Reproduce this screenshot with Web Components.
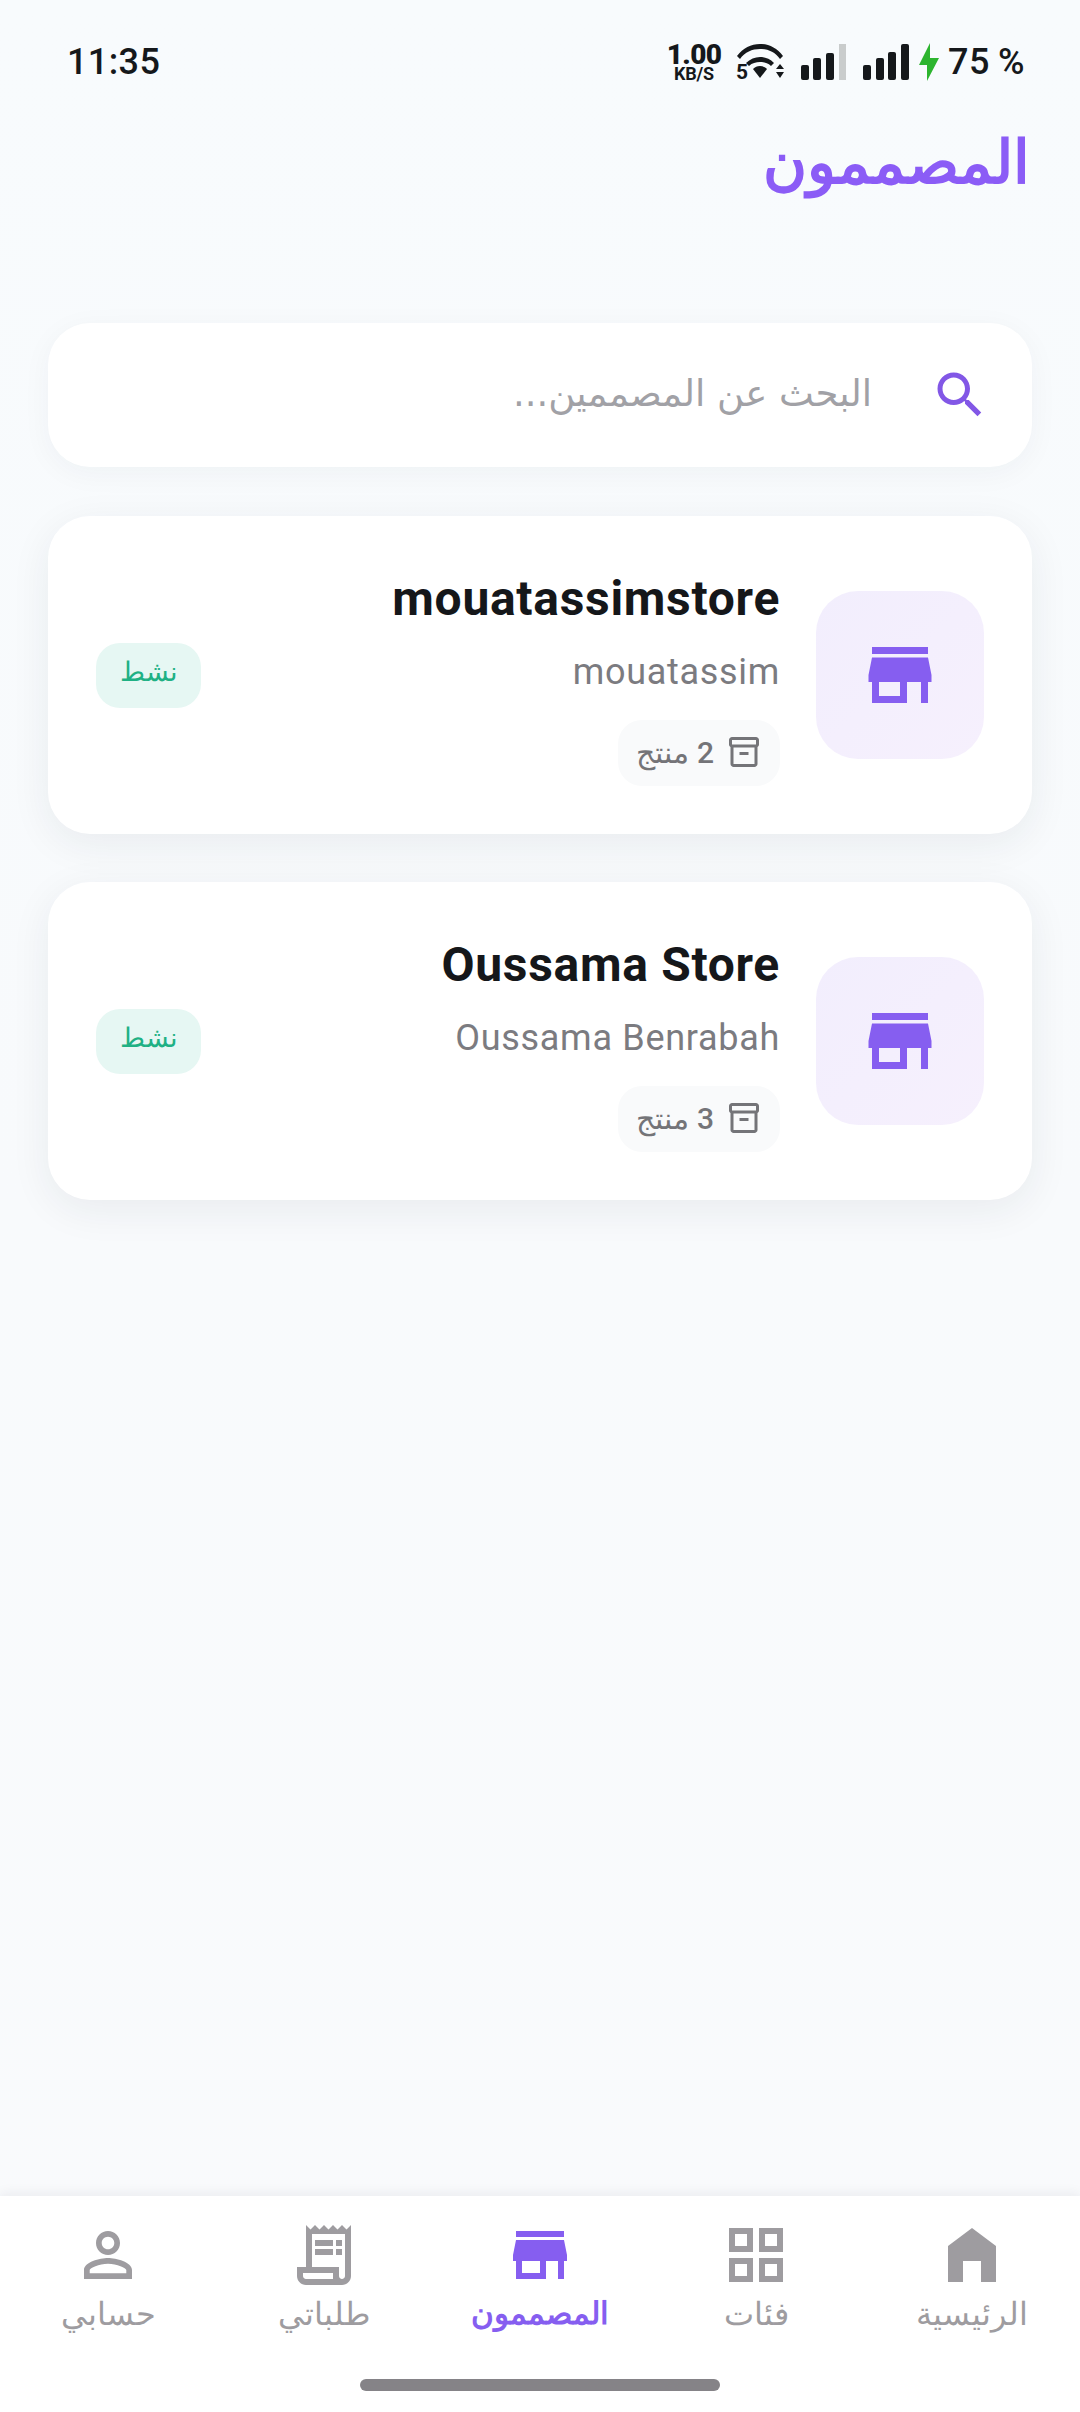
<!DOCTYPE html>
<html lang="ar">
<head>
<meta charset="utf-8">
<title>المصممون</title>
<style>
  html,body{margin:0;padding:0}
  body{width:1080px;height:2412px;overflow:hidden;display:flex;flex-direction:column;
    background:linear-gradient(180deg,#f8fbfd 0%,#f8fafc 50%,#f9fafc 100%);
    font-family:Roboto,"Noto Sans",sans-serif}
  main{flex:1;display:flex;flex-direction:column;min-height:0}
</style>
</head>
<body>
<status-bar></status-bar>
<main>
  <page-title>المصممون</page-title>
  <search-box placeholder="البحث عن المصممين..."></search-box>
  <designer-card name="mouatassimstore" owner="mouatassim" count="2"></designer-card>
  <designer-card name="Oussama Store" owner="Oussama Benrabah" count="3"></designer-card>
</main>
<bottom-nav>
  <nav-item icon="home" label="الرئيسية"></nav-item>
  <nav-item icon="grid" label="فئات"></nav-item>
  <nav-item icon="store" label="المصممون" active></nav-item>
  <nav-item icon="receipt" label="طلباتي"></nav-item>
  <nav-item icon="person" label="حسابي"></nav-item>
</bottom-nav>

<script>
const ICONS = {
  store: "M20 4H4v2h16V4zm1 10v-2l-1-5H4l-1 5v2h1v6h10v-6h4v6h2v-6h1zm-9 4H6v-4h6v4z",
  home: "M12 3 4 9v12h5v-7h6v7h5V9z",
  grid: "M3 3v8h8V3H3zm6 6H5V5h4v4zm-6 4v8h8v-8H3zm6 6H5v-4h4v4zm4-16v8h8V3h-8zm6 6h-4V5h4v4zm-6 4v8h8v-8h-8zm6 6h-4v-4h4v4z",
  receipt: "M19.5 3.5 18 2l-1.5 1.5L15 2l-1.5 1.5L12 2l-1.5 1.5L9 2 7.5 3.5 6 2v14H3v3c0 1.66 1.34 3 3 3h12c1.66 0 3-1.34 3-3V2l-1.5 1.5zM15 20H6c-.55 0-1-.45-1-1v-1h10v2zm4-1c0 .55-.45 1-1 1s-1-.45-1-1v-3H8V5h11v14zM15 7H9v2h6V7zm3 0h-2v2h2V7zm-3 3H9v2h6v-2zm3 0h-2v2h2v-2z",
  person: "M12 5.9c1.16 0 2.1.94 2.1 2.1s-.94 2.1-2.1 2.1S9.9 9.16 9.9 8s.94-2.1 2.1-2.1m0 9c2.97 0 6.1 1.46 6.1 2.1v1.1H5.9V17c0-.64 3.13-2.1 6.1-2.1M12 4C9.79 4 8 5.79 8 8s1.79 4 4 4 4-1.79 4-4-1.79-4-4-4zm0 9c-2.67 0-8 1.34-8 4v3h16v-3c0-2.66-5.33-4-8-4z",
  search: "M15.5 14h-.79l-.28-.27C15.41 12.59 16 11.11 16 9.5 16 5.91 13.09 3 9.5 3S3 5.91 3 9.5 5.91 16 9.5 16c1.61 0 3.09-.59 4.23-1.57l.27.28v.79l5 4.99L20.49 19l-4.99-5zm-6 0C7.01 14 5 11.99 5 9.5S7.01 5 9.5 5 14 7.01 14 9.5 11.99 14 9.5 14z",
  box: "M20 2H4c-1 0-2 .9-2 2v3.01c0 .72.43 1.34 1 1.69V20c0 1.1 1.1 2 2 2h14c.9 0 2-.9 2-2V8.7c.57-.35 1-.97 1-1.69V4c0-1.1-1-2-2-2zm-1 18H5V9h14v11zm1-13H4V4h16v3zM9 12h6v2H9z"
};
const icon = (name, size, color) =>
  `<svg width="${size}" height="${size}" viewBox="0 0 24 24" fill="${color}" style="display:block;flex:none"><path d="${ICONS[name]}"/></svg>`;

class StatusBar extends HTMLElement {
  constructor() {
    super();
    this.attachShadow({ mode: "open" }).innerHTML = `
      <style>
        :host{display:flex;flex:none;height:123px;box-sizing:border-box;padding:0 55px 0 67px;direction:ltr;
          justify-content:space-between;align-items:center;color:#15181b;font-family:Roboto,sans-serif}
        .time{font-size:36px;font-weight:500;letter-spacing:.4px}
        .right{display:flex;align-items:center}
        .speed{display:flex;flex-direction:column;align-items:center;font-weight:700;width:54px;margin-right:15px}
        .speed b{font-size:28px;line-height:23px;letter-spacing:-.7px}
        .speed span{font-size:18px;line-height:15px;letter-spacing:-.2px}
        svg{display:block;flex:none}
        .wifi{position:relative;width:50px;height:38px}
        .wifi span{position:absolute;left:0;bottom:-1px;font-size:21px;line-height:20px;font-weight:700}
        .batt{font-size:36px;font-weight:500;margin-left:9px;letter-spacing:.4px;word-spacing:-1px}
      </style>
      <span class="time">11:35</span>
      <div class="right">
        <div class="speed"><b>1.00</b><span>KB/S</span></div>
        <div class="wifi">
          <svg width="50" height="38" viewBox="0 0 50 38" fill="#15181b">
            <path d="M1 13C7 5 15 1 24 1s17 4 23 12l-3 3C39 9 32 6 24 6S9 9 4 16z"/>
            <path d="M10 20c4-4 9-6 14-6s10 2 14 6l-3 3c-3-3-7-4-11-4s-8 1-11 4z"/>
            <path d="M17 26c2-2 4-3 7-3s5 1 7 3l-7 9z"/>
            <path d="M40 26h8l-4-5zM40 29h8l-4 6z"/>
          </svg>
          <span>5</span>
        </div>
        <svg width="46" height="36" viewBox="0 0 46 36" style="margin-left:15px">
          <rect x="0" y="21" width="8" height="15" rx="2" fill="#15181b"/>
          <rect x="12" y="14" width="8" height="22" rx="2" fill="#15181b"/>
          <rect x="25" y="9" width="8" height="27" rx="2" fill="#15181b"/>
          <rect x="38" y="0" width="7" height="36" fill="#c9cccc"/>
        </svg>
        <svg width="46" height="36" viewBox="0 0 46 36" style="margin-left:16px" fill="#15181b">
          <rect x="0" y="21" width="8" height="15" rx="2"/>
          <rect x="13" y="14" width="8" height="22" rx="2"/>
          <rect x="25" y="8" width="8" height="28" rx="2"/>
          <rect x="38" y="0" width="8" height="36" rx="2"/>
        </svg>
        <svg width="20" height="38" viewBox="0 0 20 38" style="margin-left:10px">
          <path d="M11 0v15h9L8 38V22H0z" fill="#2db52f"/>
        </svg>
        <span class="batt">75 %</span>
      </div>`;
  }
}
customElements.define("status-bar", StatusBar);

class PageTitle extends HTMLElement {
  constructor() {
    super();
    this.attachShadow({ mode: "open" }).innerHTML = `
      <style>
        :host{display:block;direction:rtl;height:200px;box-sizing:border-box;padding:0 50px;
          color:#8b5cf6;font-size:60px;font-weight:700;line-height:80px}
      </style><slot></slot>`;
  }
}
customElements.define("page-title", PageTitle);

class SearchBox extends HTMLElement {
  connectedCallback() {
    this.attachShadow({ mode: "open" }).innerHTML = `
      <style>
        :host{display:flex;direction:rtl;align-items:center;gap:58px;height:144px;margin:0 48px 49px;
          box-sizing:border-box;padding:0 42px;background:#fff;border-radius:42px;
          box-shadow:0 6px 30px rgba(30,40,60,.045);color:#a1a1a6;font-size:37px;
          font-family:"DejaVu Sans",sans-serif}
        span{margin-bottom:4px}
      </style>
      ${icon("search", 60, "#8257e6")}
      <span>${this.getAttribute("placeholder")}</span>`;
  }
}
customElements.define("search-box", SearchBox);

class DesignerCard extends HTMLElement {
  connectedCallback() {
    this.attachShadow({ mode: "open" }).innerHTML = `
      <style>
        :host{display:flex;direction:rtl;align-items:center;height:318px;margin:0 48px 48px;box-sizing:border-box;
          padding:48px;background:#fff;border-radius:42px;box-shadow:0 10px 40px rgba(30,40,60,.07)}
        .thumb{flex:none;width:168px;height:168px;border-radius:42px;background:linear-gradient(135deg,#f2eefd,#f6f0fd);
          display:flex;align-items:center;justify-content:center}
        .info{flex:1;margin:0 36px;height:222px;display:flex;flex-direction:column;align-items:flex-start}
        .name{font-size:48px;font-weight:700;line-height:70px;color:#15171a;direction:ltr;letter-spacing:.7px}
        .owner{font-size:36px;line-height:52px;color:#7b7b80;direction:ltr;letter-spacing:.7px;margin-top:12px}
        .pill{margin-top:auto;height:66px;box-sizing:border-box;padding:0 18px 2px;border-radius:24px;background:#f9fafb;
          display:flex;align-items:center;gap:12px;color:#747478;font-size:30px;font-weight:500}
        .badge{flex:none;width:105px;height:65px;box-sizing:border-box;padding-bottom:7px;border-radius:24px;background:#e6f7f3;color:#1fb184;
          font-size:27px;font-weight:500;display:flex;align-items:center;justify-content:center}
      </style>
      <div class="thumb">${icon("store", 84, "#865ef0")}</div>
      <div class="info">
        <div class="name">${this.getAttribute("name")}</div>
        <div class="owner">${this.getAttribute("owner")}</div>
        <div class="pill">${icon("box", 36, "#747478")}<span>${this.getAttribute("count")} منتج</span></div>
      </div>
      <div class="badge">نشط</div>`;
  }
}
customElements.define("designer-card", DesignerCard);

class BottomNav extends HTMLElement {
  constructor() {
    super();
    this.attachShadow({ mode: "open" }).innerHTML = `
      <style>
        :host{display:block;flex:none;height:216px;background:#fff;direction:rtl;position:relative;
          box-shadow:0 -2px 12px rgba(30,30,50,.07)}
        .items{display:grid;grid-template-columns:repeat(5,216px);padding-top:23px}
        .handle{position:absolute;left:360px;bottom:21px;width:360px;height:12px;border-radius:6px;background:#858387}
      </style>
      <div class="items"><slot></slot></div>
      <div class="handle"></div>`;
  }
}
customElements.define("bottom-nav", BottomNav);

class NavItem extends HTMLElement {
  connectedCallback() {
    const on = this.hasAttribute("active");
    const color = on ? "#865ef0" : "#9e9ca0";
    this.attachShadow({ mode: "open" }).innerHTML = `
      <style>
        :host{display:flex;flex-direction:column;align-items:center;color:${color};
          font-size:${on ? 31 : 32}px;font-weight:${on ? 700 : 400}}
        span{line-height:48px;margin-top:-1px;white-space:nowrap}
      </style>
      ${icon(this.getAttribute("icon"), 72, color)}
      <span>${this.getAttribute("label")}</span>`;
  }
}
customElements.define("nav-item", NavItem);
</script>
</body>
</html>
